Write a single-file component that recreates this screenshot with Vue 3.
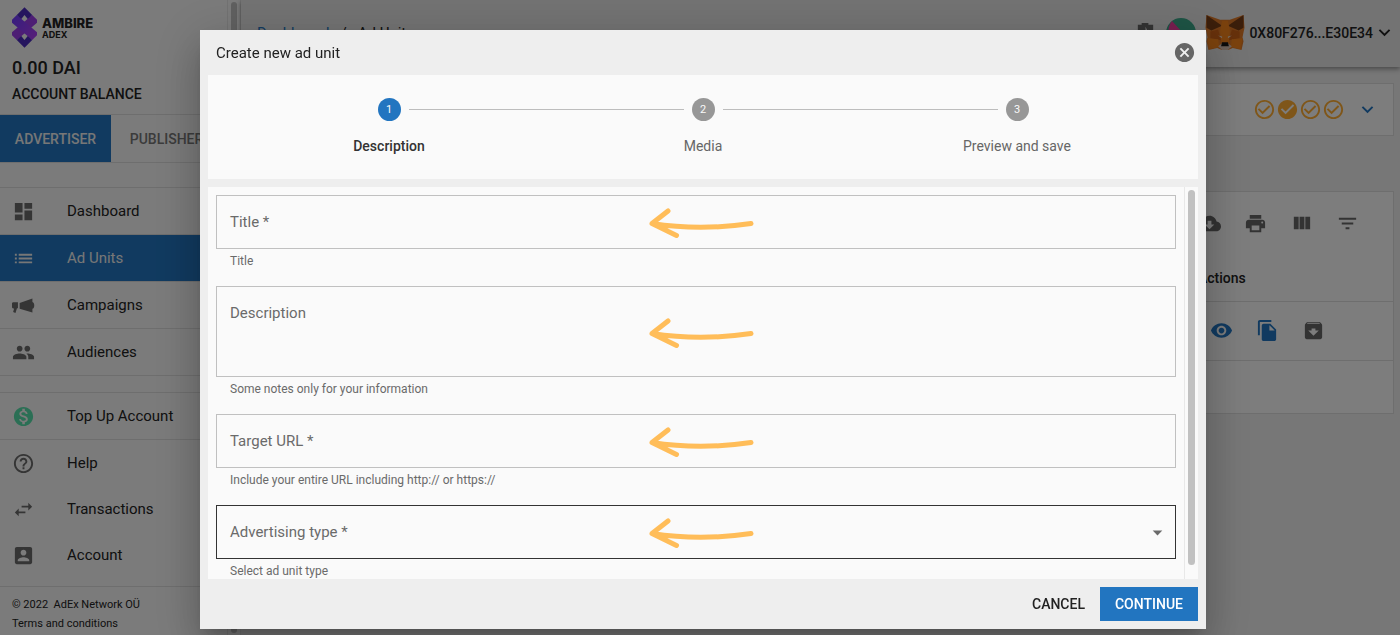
<script setup>
import { ref } from 'vue'

const icons = {
  dashboard: 'M3 13h8V3H3v10zm0 8h8v-6H3v6zm10 0h8V11h-8v10zm0-18v6h8V3h-8z',
  list: 'M3 13h2v-2H3v2zm0 4h2v-2H3v2zm0-8h2V7H3v2zm4 4h14v-2H7v2zm0 4h14v-2H7v2zM7 7v2h14V7H7z',
  campaign: 'M0 9.5L1 8.6h5.200v6.200H5.200L3.600 19.800 1.200 18.800 2.200 15H1L0 14zM8 9.500L21.300 4.600v3.700c2.600.4 2.600 6.800 0 7.200v3.700L8 15.500z',
  people: 'M16 11c1.66 0 2.99-1.34 2.99-3S17.66 5 16 5c-1.66 0-3 1.34-3 3s1.34 3 3 3zm-8 0c1.66 0 2.99-1.34 2.99-3S9.66 5 8 5C6.34 5 5 6.34 5 8s1.34 3 3 3zm0 2c-2.33 0-7 1.17-7 3.5V19h14v-2.5c0-2.33-4.67-3.5-7-3.5zm8 0c-.29 0-.62.02-.97.05 1.16.84 1.97 1.97 1.97 3.45V19h6v-2.5c0-2.33-4.67-3.5-7-3.5z',
  money: 'M12 2C6.48 2 2 6.48 2 12s4.48 10 10 10 10-4.48 10-10S17.52 2 12 2zm1.41 16.09V20h-2.67v-1.93c-1.71-.36-3.16-1.46-3.27-3.4h1.96c.1 1.05.82 1.87 2.65 1.87 1.96 0 2.4-.98 2.4-1.59 0-.83-.44-1.61-2.67-2.14-2.48-.6-4.18-1.62-4.18-3.67 0-1.72 1.39-2.84 3.11-3.21V4h2.67v1.95c1.86.45 2.79 1.86 2.85 3.39H14.3c-.05-1.11-.64-1.87-2.22-1.87-1.5 0-2.4.68-2.4 1.64 0 .84.65 1.39 2.67 1.91s4.18 1.39 4.18 3.91c-.01 1.83-1.38 2.83-3.12 3.16z',
  help: 'M11 18h2v-2h-2v2zm1-16C6.48 2 2 6.48 2 12s4.48 10 10 10 10-4.48 10-10S17.52 2 12 2zm0 18c-4.41 0-8-3.59-8-8s3.59-8 8-8 8 3.59 8 8-3.59 8-8 8zm0-14c-2.21 0-4 1.79-4 4h2c0-1.1.9-2 2-2s2 .9 2 2c0 2-3 1.75-3 5h2c0-2.25 3-2.5 3-5 0-2.21-1.79-4-4-4z',
  swap: 'M6.99 11L3 15l3.99 4v-3H14v-2H6.99v-3zM21 9l-3.99-4v3H10v2h7.01v3L21 9z',
  account: 'M3 5v14c0 1.1.89 2 2 2h14c1.1 0 2-.9 2-2V5c0-1.1-.9-2-2-2H5c-1.11 0-2 .9-2 2zm12 4c0 1.66-1.34 3-3 3s-3-1.34-3-3 1.34-3 3-3 3 1.34 3 3zm-9 8c0-2 4-3.1 6-3.1s6 1.1 6 3.1v1H6v-1z',
  download: 'M19.35 10.04C18.67 6.59 15.64 4 12 4 9.11 4 6.6 5.64 5.35 8.04 2.34 8.36 0 10.91 0 14c0 3.31 2.69 6 6 6h13c2.76 0 5-2.24 5-5 0-2.64-2.05-4.78-4.65-4.96zM17 13l-5 5-5-5h3V9h4v4h3z',
  print: 'M19 8H5c-1.66 0-3 1.34-3 3v6h4v4h12v-4h4v-6c0-1.66-1.34-3-3-3zm-3 11H8v-5h8v5zm3-7c-.55 0-1-.45-1-1s.45-1 1-1 1 .45 1 1-.45 1-1 1zm-1-9H6v4h12V3z',
  columns: 'M10 18h5V5h-5v13zm-6 0h5V5H4v13zM16 5v13h5V5h-5z',
  filter: 'M10 18h4v-2h-4v2zM3 6v2h18V6H3zm3 7h12v-2H6v2z',
  eye: 'M12 4.5C7 4.5 2.73 7.61 1 12c1.73 4.39 6 7.5 11 7.5s9.27-3.11 11-7.5c-1.73-4.39-6-7.5-11-7.5zM12 17c-2.76 0-5-2.24-5-5s2.24-5 5-5 5 2.24 5 5-2.24 5-5 5zm0-8c-1.66 0-3 1.34-3 3s1.34 3 3 3 3-1.34 3-3-1.34-3-3-3z',
  copy: 'M16 1H4c-1.1 0-2 .9-2 2v14h2V3h12V1zm-1 4l6 6v10c0 1.1-.9 2-2 2H7.99C6.89 23 6 22.1 6 21l.01-14c0-1.1.89-2 1.99-2h7zm-1 7h5.5L14 6.5V12z',
  archive: 'M20.54 5.23l-1.39-1.68C18.88 3.21 18.47 3 18 3H6c-.47 0-.88.21-1.16.55L3.46 5.23C3.17 5.57 3 6.02 3 6.5V19c0 1.1.9 2 2 2h14c1.1 0 2-.9 2-2V6.5c0-.48-.17-.93-.46-1.27zM12 17.5L6.5 12H10v-2h4v2h3.5L12 17.5zM5.12 5l.81-1h12l.94 1H5.12z',
  checkOutline: 'M16.59 7.58L10 14.17l-3.59-3.58L5 12l5 5 8-8zM12 2C6.48 2 2 6.48 2 12s4.48 10 10 10 10-4.48 10-10S17.52 2 12 2zm0 18c-4.42 0-8-3.58-8-8s3.58-8 8-8 8 3.58 8 8-3.58 8-8 8z',
  check: 'M12 2C6.48 2 2 6.48 2 12s4.48 10 10 10 10-4.48 10-10S17.52 2 12 2zm-2 15l-5-5 1.41-1.41L10 14.17l7.59-7.59L19 8l-9 9z',
  expand: 'M16.59 8.59L12 13.17 7.41 8.59 6 10l6 6 6-6z',
  cancel: 'M12 2C6.47 2 2 6.47 2 12s4.47 10 10 10 10-4.47 10-10S17.53 2 12 2zm5 13.59L15.59 17 12 13.41 8.41 17 7 15.59 10.59 12 7 8.41 8.41 7 12 10.59 15.59 7 17 8.41 13.41 12 17 15.59z',
  dropDown: 'M7 10l5 5 5-5z',
}

const navGroups = [
  {
    ruled: true,
    items: [
      { label: 'Dashboard', icon: 'dashboard' },
      { label: 'Ad Units', icon: 'list', active: true },
      { label: 'Campaigns', icon: 'campaign' },
      { label: 'Audiences', icon: 'people' },
    ],
  },
  { ruled: true, items: [{ label: 'Top Up Account', icon: 'money', green: true }] },
  {
    ruled: false,
    items: [
      { label: 'Help', icon: 'help' },
      { label: 'Transactions', icon: 'swap' },
      { label: 'Account', icon: 'account' },
    ],
  },
]

const tableTools = [
  { label: 'Download', icon: 'download' },
  { label: 'Print', icon: 'print' },
  { label: 'View columns', icon: 'columns' },
  { label: 'Filter', icon: 'filter' },
]

const rowActions = [
  { label: 'View', icon: 'eye', blue: true },
  { label: 'Clone', icon: 'copy', blue: true },
  { label: 'Archive', icon: 'archive' },
]

const checks = ['checkOutline', 'check', 'checkOutline', 'checkOutline']
const steps = ['Description', 'Media', 'Preview and save']
const activeStep = ref(0)

const fields = [
  { id: 'title', type: 'input', label: 'Title *', help: 'Title' },
  { id: 'description', type: 'textarea', label: 'Description', help: 'Some notes only for your information' },
  { id: 'target-url', type: 'input', label: 'Target URL *', help: 'Include your entire URL including http:// or https://' },
  { id: 'ad-type', type: 'select', label: 'Advertising type *', help: 'Select ad unit type', hovered: true },
]

const form = ref({ title: '', description: '', 'target-url': '', 'ad-type': '' })
</script>

<template>
  <div class="page">
    <aside class="sidebar">
      <div class="sidebar-content">
        <a class="brand" href="#">
          <svg class="brand-mark" viewBox="0 0 26 42" aria-hidden="true">
            <defs>
              <linearGradient id="mark-band" x1="0" y1="0" x2="1" y2="1">
                <stop offset="0" stop-color="#6b3cff" />
                <stop offset="1" stop-color="#b23cf0" />
              </linearGradient>
            </defs>
            <path fill="#4a2bbd" d="M13 0l8 8-4 5-4-5-4 5-4-5z" />
            <path fill="#4a2bbd" d="M13 42l8-8-4-5-4 5-4-5-4 5z" />
            <path fill="#9a3ce8" d="M21 8l5 5v3L5 34l-5-5v-3z" />
            <path fill="url(#mark-band)" d="M5 8l-5 5v3l21 18 5-5v-3z" />
          </svg>
          <span class="brand-name"><span>AMBIRE</span><small>ADEX</small></span>
        </a>
        <div class="balance">
          <strong>0.00 DAI</strong>
          <span>ACCOUNT BALANCE</span>
        </div>
        <div class="side-tabs">
          <button class="side-tab active" type="button">ADVERTISER</button>
          <button class="side-tab" type="button">PUBLISHER</button>
        </div>
        <nav class="nav">
          <ul v-for="(group, g) in navGroups" :key="g" class="nav-group" :class="{ ruled: group.ruled }">
            <li v-for="item in group.items" :key="item.label">
              <a class="nav-link" :class="{ active: item.active }" href="#">
                <svg class="icon" :class="{ green: item.green }" viewBox="0 0 24 24" aria-hidden="true">
                  <path :d="icons[item.icon]" />
                </svg>
                {{ item.label }}
              </a>
            </li>
          </ul>
        </nav>
        <footer class="legal">
          <a href="#">© 2022 &nbsp;AdEx Network OÜ</a>
          <a href="#">Terms and conditions</a>
        </footer>
      </div>
      <div class="side-track"><div class="side-thumb"></div></div>
    </aside>

    <div class="main">
      <header class="topbar">
        <div class="crumbs"><a href="#">Dashboard</a><span>/</span><span>Ad Units</span></div>
        <button class="plain" type="button" aria-label="Settings">
          <svg class="icon" viewBox="0 0 24 24" aria-hidden="true">
            <path d="M4 4h4V2h7v2h5v17H4zM12 6v6h5l-2-3-1 1z" fill-rule="evenodd" />
          </svg>
        </button>
        <svg class="identicon" viewBox="0 0 30 30" aria-hidden="true">
          <circle cx="15" cy="15" r="15" fill="#3ba88a" />
          <path fill="#f03ea0" d="M6 3l20 22A15 15 0 0 1 6 3z" />
        </svg>
        <button class="wallet" type="button">
          <svg class="fox" viewBox="0 0 40 38" aria-hidden="true">
            <path fill="#e07a28" d="M1 1l14 5h10L39 1l1 13-2 10 1 4-2 9-9-2-5 2h-6l-5-2-9 2-2-9 1-4L0 14z" />
            <path fill="#763d16" d="M1 1l16 11-11 5-5-3zM39 1L23 12l11 5 5-3z" />
            <path fill="#f6851b" d="M17 7h6l2 10-1 12h-8l-1-12z" />
            <path fill="#cd6116" d="M5 18l8-2 3 11-11-2zM35 18l-8-2-3 11 11-2z" />
            <path fill="#f6851b" d="M2 25l11 1 1 8-10 2zM38 25l-11 1-1 8 10 2z" />
            <path fill="#d7c1b3" d="M13 33l4-3h6l4 3-4 4h-6z" />
            <path fill="#161616" d="M17 29h6l1 4h-8z" />
            <path fill="#e5d5c5" d="M13 22l4 1v2zM27 22l-4 1v2z" />
          </svg>
          0X80F276...E30E34
          <svg class="icon" viewBox="0 0 24 24" aria-hidden="true"><path :d="icons.expand" /></svg>
        </button>
      </header>

      <section class="card summary">
        <div class="checks">
          <svg v-for="(name, i) in checks" :key="i" class="icon" viewBox="0 0 24 24" aria-hidden="true">
            <path :d="icons[name]" />
          </svg>
        </div>
        <button class="plain" type="button" aria-label="Expand">
          <svg class="icon blue" viewBox="0 0 24 24" aria-hidden="true"><path :d="icons.expand" /></svg>
        </button>
      </section>

      <section class="card units">
        <div class="tools">
          <button v-for="tool in tableTools" :key="tool.icon" class="plain" type="button" :aria-label="tool.label">
            <svg class="icon" viewBox="0 0 24 24" aria-hidden="true"><path :d="icons[tool.icon]" /></svg>
          </button>
        </div>
        <table class="units-table">
          <thead>
            <tr>
              <td></td>
              <th class="actions-col" scope="col">Actions</th>
            </tr>
          </thead>
          <tbody>
            <tr>
              <td></td>
              <td>
                <div class="row-actions">
                  <button v-for="action in rowActions" :key="action.icon" class="plain" type="button" :aria-label="action.label">
                    <svg class="icon" :class="{ blue: action.blue }" viewBox="0 0 24 24" aria-hidden="true">
                      <path :d="icons[action.icon]" />
                    </svg>
                  </button>
                </div>
              </td>
            </tr>
          </tbody>
        </table>
      </section>
    </div>

    <div class="backdrop">
      <div class="dialog" role="dialog" aria-modal="true" aria-labelledby="dialog-title">
        <header class="dialog-header">
          <h2 id="dialog-title">Create new ad unit</h2>
          <button class="plain" type="button" aria-label="Close">
            <svg class="icon" viewBox="0 0 24 24" aria-hidden="true"><path :d="icons.cancel" /></svg>
          </button>
        </header>

        <ol class="stepper">
          <li v-for="(step, i) in steps" :key="step" class="step" :class="{ active: i === activeStep }">
            <div class="step-rail"><span class="step-number">{{ i + 1 }}</span></div>
            <span class="step-label">{{ step }}</span>
          </li>
        </ol>

        <div class="form-area">
          <form class="form" @submit.prevent>
            <div v-for="field in fields" :key="field.id" class="field">
              <div class="field-box" :class="{ hovered: field.hovered }">
                <label :for="field.id">{{ field.label }}</label>
                <textarea v-if="field.type === 'textarea'" :id="field.id" v-model="form[field.id]"></textarea>
                <select v-else-if="field.type === 'select'" :id="field.id" v-model="form[field.id]">
                  <option value=""></option>
                </select>
                <input v-else :id="field.id" v-model="form[field.id]" type="text" />
                <svg v-if="field.type === 'select'" class="icon select-arrow" viewBox="0 0 24 24" aria-hidden="true">
                  <path :d="icons.dropDown" />
                </svg>
                <svg class="hand-arrow" viewBox="0 0 108 34" aria-hidden="true">
                  <path d="M103 18.500Q52 26 4 18.500L20 6M4 18.500L28.500 30.500" />
                </svg>
              </div>
              <p class="help">{{ field.help }}</p>
            </div>
          </form>
          <div class="form-track"><div class="form-thumb"></div></div>
        </div>

        <footer class="dialog-footer">
          <button class="action" type="button">CANCEL</button>
          <button class="action primary" type="button">CONTINUE</button>
        </footer>
      </div>
    </div>
  </div>
</template>

<style>
body {
  background: #eee;
}
</style>

<style scoped>
.page {
  display: flex;
  height: 100vh;
  overflow: hidden;
  font-family: Roboto, "Liberation Sans", sans-serif;
  font-size: 15px;
  color: #222;
  background: #eee;
}

.page * {
  box-sizing: border-box;
}

button,
input,
textarea,
select {
  margin: 0;
  padding: 0;
  border: 0;
  background: none;
  font: inherit;
  color: inherit;
}

a {
  color: inherit;
  text-decoration: none;
}

.icon {
  display: block;
  flex: none;
  width: 23px;
  height: 23px;
  fill: currentColor;
}

.blue {
  color: #2275c0;
}

.plain {
  display: grid;
  place-items: center;
  color: #666;
}

/* sidebar */
.sidebar {
  display: flex;
  flex: none;
  width: 241px;
  background: #f6f6f6;
}

.sidebar-content {
  display: flex;
  flex: 1;
  flex-direction: column;
}

.sidebar-content > * {
  flex: none;
}

.brand {
  display: flex;
  align-items: center;
  gap: 5px;
  padding: 7px 12px 0;
}

.brand-mark {
  width: 25px;
  height: 41px;
}

.brand-name {
  display: flex;
  flex-direction: column;
  font: 800 13px/14px Inter, sans-serif;
}

.brand-name small {
  font-size: 9px;
  line-height: 10px;
  font-weight: 700;
}

.balance {
  display: flex;
  flex-direction: column;
  gap: 6px;
  padding: 8px 12px 12px;
  font-weight: 500;
}

.balance strong {
  font-size: 18px;
  line-height: 24px;
  font-weight: 500;
}

.balance span {
  font-size: 14px;
  line-height: 16px;
}

.side-tabs {
  display: flex;
  height: 49px;
  margin-bottom: 24px;
  border-top: 1px solid #ddd;
  border-bottom: 1px solid #ddd;
  overflow: hidden;
}

.side-tab {
  flex: none;
  width: 111px;
  font-size: 14px;
  font-weight: 500;
  color: #777;
}

.side-tab.active {
  background: #2275c0;
  color: #eee;
}

.nav-group {
  margin: 0;
  padding: 0;
  list-style: none;
}

.nav-group.ruled {
  border-top: 1px solid #ddd;
}

.nav-group.ruled li {
  border-bottom: 1px solid #ddd;
}

.nav-group + .nav-group.ruled {
  margin-top: 16px;
}

.nav-link {
  display: flex;
  align-items: center;
  gap: 32px;
  height: 46px;
  padding-left: 12px;
}

.nav-link .icon {
  color: #6a6a6a;
}

.nav-link .icon.green {
  color: #57dfaa;
}

.nav-link.active,
.nav-link.active .icon {
  background: #2275c0;
  color: #eee;
}

.legal {
  display: flex;
  flex-direction: column;
  margin-top: 8px;
  padding: 8px 12px;
  border-top: 1px solid #ddd;
  font-size: 11px;
  line-height: 19px;
}

.side-track {
  width: 14px;
  padding: 2px 3px;
  border: solid #e4e4e4;
  border-width: 0 1px;
}

.side-thumb {
  height: 100%;
  border-radius: 4px;
  background: #c1c1c1;
}

/* main column */
.main {
  flex: 1;
  min-width: 0;
}

.topbar {
  display: flex;
  align-items: center;
  gap: 9px;
  height: 67px;
  padding: 0 4px 2px 16px;
  background: #e6e6e6;
  box-shadow: 0 2px 5px rgba(0, 0, 0, 0.4);
}

.crumbs {
  display: flex;
  flex: 1;
  gap: 11px;
}

.crumbs a {
  color: #2275c0;
}

.identicon {
  width: 30px;
  height: 30px;
}

.wallet {
  display: flex;
  align-items: center;
  font-size: 14px;
  font-weight: 500;
}

.fox {
  width: 40px;
  height: 37px;
  margin-right: 4px;
}

.card {
  margin: 16px 6px 0 16px;
  border: 1px solid #dcdcdc;
  background: #fafafa;
}

.summary {
  display: flex;
  align-items: center;
  justify-content: flex-end;
  gap: 11px;
  height: 53px;
  padding-right: 14px;
}

.checks {
  display: flex;
  color: #ffad33;
}

.units {
  height: 223px;
  margin-top: 55px;
}

.tools {
  display: flex;
  align-items: center;
  justify-content: flex-end;
  gap: 23px;
  height: 63px;
  padding-right: 34px;
}

.units-table {
  width: 100%;
  border-collapse: collapse;
}

.units-table tr {
  border-bottom: 1px solid #dcdcdc;
}

.units-table th,
.units-table td {
  padding: 0;
}

.actions-col {
  width: 195px;
  height: 46px;
  font-size: 14px;
  font-weight: 500;
  text-align: left;
}

.row-actions {
  display: flex;
  align-items: center;
  gap: 23px;
  height: 58px;
  padding-left: 12px;
}

/* dialog */
.backdrop {
  position: fixed;
  inset: 0;
  display: flex;
  padding: 30px 194px 6px 200px;
  background: rgba(0, 0, 0, 0.5);
}

.dialog {
  display: flex;
  flex: 1;
  flex-direction: column;
  min-width: 0;
  padding: 0 8px;
  background: #eee;
  box-shadow: 0 11px 15px -7px rgba(0, 0, 0, 0.2), 0 24px 38px 3px rgba(0, 0, 0, 0.14), 0 9px 46px 8px rgba(0, 0, 0, 0.12);
}

.dialog-header {
  display: flex;
  align-items: center;
  justify-content: space-between;
  height: 45px;
  padding: 0 2px 0 8px;
}

.dialog-header h2 {
  margin: 0;
  font-size: 15px;
  font-weight: 400;
}

.stepper {
  display: flex;
  margin: 0 0 8px;
  padding: 23px 24px;
  list-style: none;
  background: #fafafa;
}

.step {
  display: flex;
  flex: 1;
  flex-direction: column;
  align-items: center;
  gap: 15px;
  font-size: 14px;
  line-height: 20px;
  color: #666;
}

.step.active {
  font-weight: 500;
  color: #333;
}

.step-rail {
  display: flex;
  align-items: center;
  gap: 8px;
  align-self: stretch;
}

.step-rail::before,
.step-rail::after {
  content: "";
  flex: 1;
  height: 1px;
  background: #bdbdbd;
}

.step:first-child .step-rail::before,
.step:last-child .step-rail::after {
  background: none;
}

.step-number {
  width: 23px;
  height: 23px;
  border-radius: 50%;
  background: #979797;
  font-size: 11px;
  font-weight: 400;
  line-height: 23px;
  text-align: center;
  color: #fafafa;
}

.step.active .step-number {
  background: #2275c0;
}

.form-area {
  display: flex;
  flex: 1;
  min-height: 0;
  overflow: hidden;
  background: #fafafa;
}

.form {
  flex: 1;
  min-width: 0;
  padding: 8px;
}

.field {
  margin-bottom: 17px;
}

.field-box {
  position: relative;
  display: flex;
  border: 1px solid #c0c0c0;
}

.field-box.hovered {
  border-color: #333;
}

.field-box label {
  position: absolute;
  top: 15px;
  left: 13px;
  line-height: 22px;
  color: #6a6a6a;
  pointer-events: none;
}

.field-box input,
.field-box textarea,
.field-box select {
  width: 100%;
  height: 52px;
  padding: 15px 13px;
  border-radius: 0;
  outline: none;
  resize: none;
  appearance: none;
}

.field-box textarea {
  height: 89px;
}

.select-arrow {
  position: absolute;
  top: 15px;
  right: 6px;
  color: #6a6a6a;
  pointer-events: none;
}

.hand-arrow {
  position: absolute;
  top: 0;
  bottom: 0;
  left: 45%;
  width: 108px;
  height: 34px;
  margin: auto 0;
  fill: none;
  stroke: #ffbd59;
  stroke-width: 5;
  stroke-linecap: round;
  stroke-linejoin: round;
  pointer-events: none;
}

.help {
  margin: 4px 14px 0;
  font-size: 12px;
  line-height: 16px;
  color: #6a6a6a;
}

.form-track {
  width: 14px;
  padding: 3px 3px 14px;
  border-left: 1px solid #e8e8e8;
}

.form-thumb {
  height: 100%;
  border-radius: 4px;
  background: #c1c1c1;
}

.dialog-footer {
  display: flex;
  justify-content: flex-end;
  padding: 8px 0;
}

.action {
  height: 34px;
  padding: 0 15px;
  font-size: 14px;
  font-weight: 500;
}

.action.primary {
  background: #2275c0;
  color: #fff;
}
</style>
